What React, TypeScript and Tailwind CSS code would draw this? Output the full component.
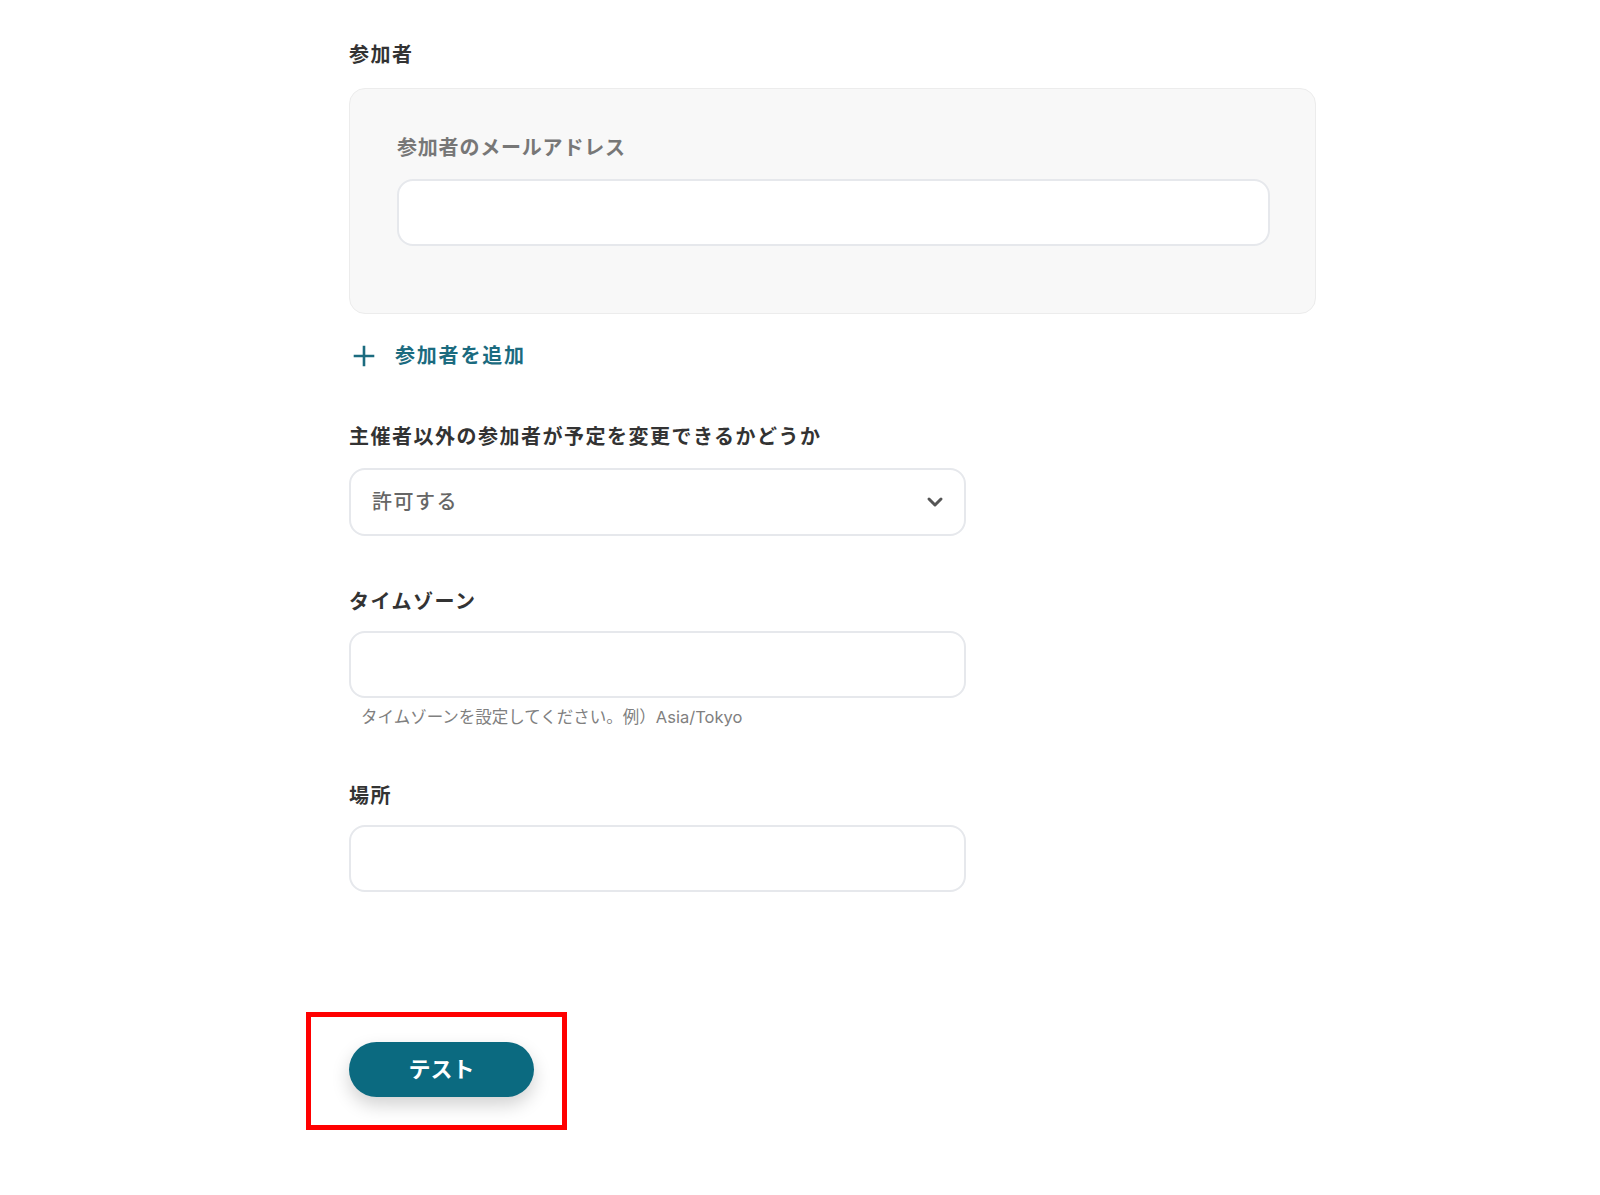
import React from 'react';

const font = { fontFamily: 'Inter, "Noto Sans CJK JP", "Noto Sans", sans-serif' };

const TextBox: React.FC<{ className?: string }> = ({ className = '' }) => (
  <div className={`h-[67px] rounded-[16px] border-2 border-[#e6e8ec] bg-white ${className}`} />
);

const FieldLabel: React.FC<{ children: React.ReactNode }> = ({ children }) => (
  <div className="text-[20px] leading-[28px] font-bold tracking-[1.5px] text-[#333333]">{children}</div>
);

export default function App() {
  return (
    <div className="min-h-[1195px] w-[1600px] bg-white pl-[349px] pt-[41px]" style={font}>
      <FieldLabel>参加者</FieldLabel>

      <div className="mt-[19px] w-[967px] rounded-[16px] border border-[#ececec] bg-[#f8f8f8] pl-[47px] pr-[45px] pt-[45px] pb-[67px]">
        <div className="text-[20px] leading-[28px] font-semibold tracking-[0.8px] text-[#777777]">参加者のメールアドレス</div>
        <TextBox className="mt-[17px]" />
      </div>

      <button className="mt-[28px] flex items-center h-[28px] text-[#1b6b7f]">
        <svg width="22" height="22" viewBox="0 0 22 22" className="ml-[4px]" fill="none" stroke="currentColor" strokeWidth="2.6" strokeLinecap="square">
          <path d="M11 2v18M2 11h18" />
        </svg>
        <span className="ml-[20px] text-[20px] leading-[28px] font-bold tracking-[1.8px]">参加者を追加</span>
      </button>

      <div className="mt-[53px] w-[617px]">
        <FieldLabel>主催者以外の参加者が予定を変更できるかどうか</FieldLabel>
        <div className="mt-[17px] flex h-[68px] items-center justify-between rounded-[16px] border-2 border-[#e6e8ec] bg-white pl-[21px] pr-[20px]">
          <span className="text-[20px] font-medium tracking-[1.5px] text-[#666666]">許可する</span>
          <svg width="18" height="12" viewBox="0 0 18 12" fill="none" stroke="#555555" strokeWidth="3" strokeLinecap="round" strokeLinejoin="round">
            <path d="M3 3l6 6 6-6" />
          </svg>
        </div>

        <div className="mt-[52px]">
          <FieldLabel>タイムゾーン</FieldLabel>
        </div>
        <TextBox className="mt-[15px] h-[66px]" />
        <div className="mt-[7px] pl-[12px] text-[16.5px] leading-[24px] text-[#808080]">
          タイムゾーンを設定してください。例）Asia/Tokyo
        </div>

        <div className="mt-[53px]">
          <FieldLabel>場所</FieldLabel>
        </div>
        <TextBox className="mt-[15px] h-[67px]" />
      </div>

      <div className="mt-[120px] ml-[-43px] h-[118px] w-[261px] border-[5px] border-[#ff0000] pl-[38px] pt-[25px]">
        <button className="flex h-[55px] w-[185px] items-center justify-center rounded-full bg-[#0b6a80] text-[22px] font-bold text-white shadow-[0_8px_18px_rgba(0,0,0,0.18)]">
          テスト
        </button>
      </div>
    </div>
  );
}
